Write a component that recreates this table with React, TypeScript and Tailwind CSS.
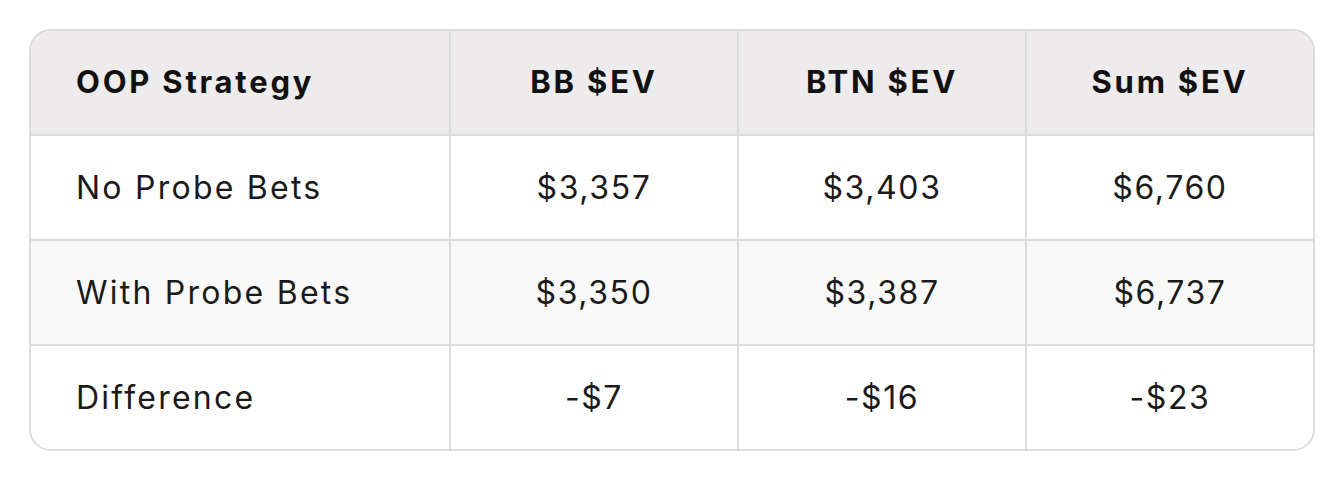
import React from "react";

const HEADERS = ["OOP Strategy", "BB $EV", "BTN $EV", "Sum $EV"];

const ROWS = [
  { label: "No Probe Bets", bb: "$3,357", btn: "$3,403", sum: "$6,760" },
  { label: "With Probe Bets", bb: "$3,350", btn: "$3,387", sum: "$6,737" },
  { label: "Difference", bb: "-$7", btn: "-$16", sum: "-$23" },
];

const COLS = "grid grid-cols-[418px_2px_286px_2px_286px_2px_1fr]";

function Line() {
  return <div className="bg-[#dddcdc]" />;
}

export default function App() {
  return (
    <div
      className="w-[1344px] h-[480px] bg-white pt-[29px] pl-[29px]"
      style={{ fontFamily: "Inter, 'Noto Sans', sans-serif" }}
    >
      <div className="w-[1286px] border-2 border-[#dddcdc] rounded-[22px] overflow-hidden">
        {/* Header */}
        <div
          className={`${COLS} h-[103px] bg-[#edebec] text-[#111111] font-bold text-[31px] tracking-[0.09em]`}
        >
          <div className="flex items-center pl-[45px]">{HEADERS[0]}</div>
          <Line />
          <div className="flex items-center justify-center">{HEADERS[1]}</div>
          <Line />
          <div className="flex items-center justify-center">{HEADERS[2]}</div>
          <Line />
          <div className="flex items-center justify-center">{HEADERS[3]}</div>
        </div>

        {/* Body */}
        {ROWS.map((row, i) => (
          <div
            key={row.label}
            className={`${COLS} h-[105px] border-t-2 border-[#dddcdc] text-[32px] tracking-[0.05em] text-[#1a1a1a] ${
              i === 1 ? "bg-[#f9f9f9]" : "bg-white"
            }`}
          >
            <div className="flex items-center pl-[45px] tracking-[0.07em]">{row.label}</div>
            <Line />
            <div className="flex items-center justify-center">{row.bb}</div>
            <Line />
            <div className="flex items-center justify-center">{row.btn}</div>
            <Line />
            <div className="flex items-center justify-center">{row.sum}</div>
          </div>
        ))}
      </div>
    </div>
  );
}
